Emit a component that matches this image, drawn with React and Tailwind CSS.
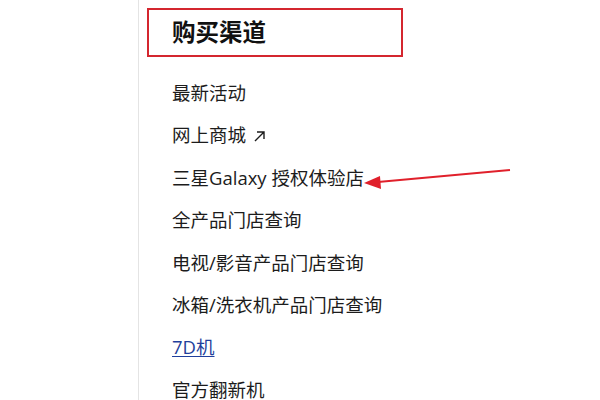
export default function App() {
  const links = [
    { label: "最新活动" },
    { label: "网上商城", ext: true },
    { label: "三星Galaxy 授权体验店" },
    { label: "全产品门店查询" },
    { label: "电视/影音产品门店查询" },
    { label: "冰箱/洗衣机产品门店查询" },
    { label: "7D机", link: true },
    { label: "官方翻新机" },
  ];

  return (
    <div
      className="relative w-[600px] h-[400px] overflow-hidden bg-white"
      style={{ fontFamily: '"Open Sans", "Noto Sans CJK SC", sans-serif' }}
    >
      <div className="flex h-full">
        <div className="w-[139px] border-r border-[#e4e4e4]" />
        <div className="pl-[8px] pt-[8px]">
          <div className="w-[256px] h-[49px] border-2 border-[#d4262f] flex items-center pl-[23px]">
            <h2 className="text-[23.5px] font-bold text-[#111]">购买渠道</h2>
          </div>
          <ul className="mt-[23px] pl-[25px] flex flex-col gap-[17.4px] text-[18.5px] text-[#1c1c1c]">
            {links.map((l, i) => (
              <li key={i} className="leading-[25px] whitespace-nowrap">
                {l.link ? (
                  <a className="text-[#1f3f9c] underline underline-offset-2">{l.label}</a>
                ) : (
                  <span>{l.label}</span>
                )}
                {l.ext && (
                  <svg className="inline-block ml-[7px] align-[-1px]" width="13" height="13" viewBox="0 0 13 13">
                    <path d="M2 11 L11 2 M4 2 H11 V9" fill="none" stroke="#1c1c1c" strokeWidth="1.4" />
                  </svg>
                )}
              </li>
            ))}
          </ul>
        </div>
      </div>
      <svg className="absolute left-0 top-0 pointer-events-none" width="600" height="400">
        <line x1="510" y1="170" x2="378" y2="182" stroke="#e0202b" strokeWidth="2" />
        <polygon points="364,183 380,176 381,189" fill="#e0202b" />
      </svg>
    </div>
  );
}
